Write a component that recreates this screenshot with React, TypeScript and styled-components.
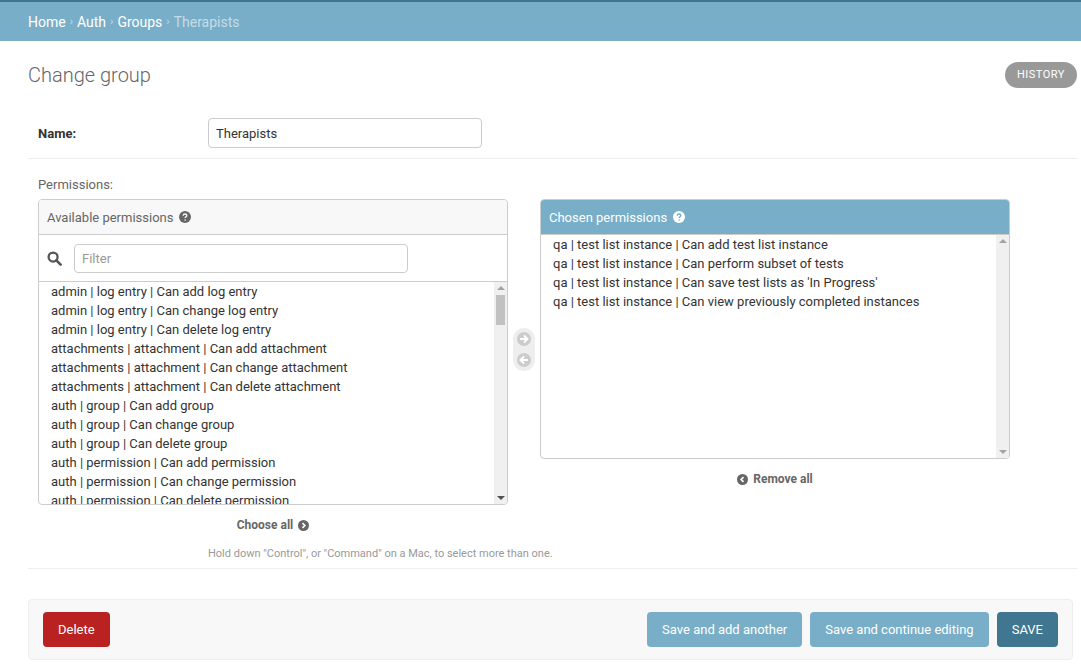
import React from "react";
import styled, { createGlobalStyle } from "styled-components";

const Global = createGlobalStyle`
  html, body { margin: 0; padding: 0; background: #fff; }
  body { font-family: Roboto, "Liberation Sans", sans-serif; color: #333; font-size: 14px; }
  * { box-sizing: border-box; }
`;

const Header = styled.div`
  height: 41px; background: #79aec8; border-top: 2px solid #417690;
  display: flex; align-items: center; padding: 0 28px; font-size: 14px; color: #fff;
  a { color: #fff; text-decoration: none; }
`;
const Sep = styled.span` margin: 0 4px; font-size: 11px; color: #c4dce8; `;
const Current = styled.span` color: #c4dce8; `;

const Content = styled.div` padding: 18px 4px 0 28px; `;
const TitleRow = styled.div` display: flex; justify-content: space-between; align-items: flex-start; `;
const Title = styled.h1` margin: 4px 0 0; font-size: 20px; font-weight: 300; color: #666; `;
const History = styled.a`
  margin-top: 3px; background: #999; color: #fff; border-radius: 15px; font-size: 11px;
  letter-spacing: 0.5px; height: 26px; line-height: 26px; width: 72px; text-align: center;
`;

const FormRow = styled.div`
  display: flex; align-items: center; padding: 20px 10px 10px; border-bottom: 1px solid #eee;
`;
const Label = styled.label` width: 170px; font-weight: bold; font-size: 13px; color: #333; `;
const TextInput = styled.div`
  width: 274px; height: 30px; border: 1px solid #ccc; border-radius: 4px; padding: 0 7px;
  display: flex; align-items: center; font-size: 13px; color: #333;
`;

const PermRow = styled.div` padding: 18px 10px 8px; border-bottom: 1px solid #eee; `;
const PermLabel = styled.div` font-size: 13px; color: #666; margin-bottom: 7px; `;
const Selector = styled.div` display: flex; align-items: flex-start; `;
const Column = styled.div` width: 470px; display: flex; flex-direction: column; `;
const Box = styled.div<{ $h: number }>`
  border: 1px solid #ccc; border-radius: 4px; overflow: hidden; height: ${p => p.$h}px;
  display: flex; flex-direction: column;
`;
const BoxHead = styled.div<{ $chosen?: boolean }>`
  height: 35px; padding: 0 8px; display: flex; align-items: center; gap: 6px; font-size: 13px;
  background: ${p => (p.$chosen ? "#79aec8" : "#f8f8f8")}; color: ${p => (p.$chosen ? "#fff" : "#666")};
  border-bottom: 1px solid #ccc;
`;
const FilterRow = styled.div`
  height: 47px; display: flex; align-items: center; gap: 12px; padding: 0 8px; border-bottom: 1px solid #ccc;
`;
const FilterInput = styled.div`
  width: 334px; height: 29px; border: 1px solid #ccc; border-radius: 4px; padding: 0 7px;
  display: flex; align-items: center; font-size: 13px; color: #999;
`;
const ListArea = styled.div` flex: 1; display: flex; overflow: hidden; `;
const List = styled.div` flex: 1; padding: 0 12px; font-size: 13px; color: #333; line-height: 19px; overflow: hidden; `;
const ScrollTrack = styled.div`
  width: 13px; background: #f0f0f0; display: flex; flex-direction: column; align-items: center; padding: 4px 0;
`;
const Thumb = styled.div` width: 9px; height: 30px; background: #c1c1c1; margin-top: 5px; `;
const Fill = styled.div` flex: 1; `;
const ArrowUp = styled.div` width: 0; height: 0; border-left: 4px solid transparent; border-right: 4px solid transparent; border-bottom: 4px solid #a3a3a3; `;
const ArrowDown = styled(ArrowUp)<{ $c: string }>` border-bottom: none; border-top: 4px solid ${p => p.$c}; `;

const Movers = styled.div`
  margin: 129px 5px 0 5px; width: 22px; padding: 4px 0; border-radius: 11px; background: #eee;
  display: flex; flex-direction: column; align-items: center; gap: 7px;
`;
const ActionLink = styled.div<{ $mt: number }>`
  display: flex; align-items: center; justify-content: center; gap: 5px; font-weight: bold;
  font-size: 12px; color: #666; margin-top: ${p => p.$mt}px;
`;
const Help = styled.div` font-size: 11px; color: #999; margin: 15px 0 0 170px; `;

const Submit = styled.div`
  margin: 30px 4px 0 0; background: #f8f8f8; border: 1px solid #eee; border-radius: 4px;
  padding: 12px 14px; display: flex; align-items: center; gap: 8px;
`;
const Btn = styled.div<{ $bg: string }>`
  height: 35px; padding: 0 15px; border-radius: 4px; background: ${p => p.$bg}; color: #fff;
  font-size: 13px; display: flex; align-items: center;
`;
const Spacer = styled.div` flex: 1; `;

const Circle = ({ dir, color, size = 14 }: { dir: "l" | "r"; color: string; size?: number }) => (
  <svg width={size} height={size} viewBox="0 0 16 16">
    <circle cx="8" cy="8" r="8" fill={color} />
    {dir === "r" ? (
      <path d="M3.5 8h8M8 4L12 8 8 12" stroke="#fff" strokeWidth="2.2" fill="none" />
    ) : (
      <path d="M12.5 8h-8M8 4L4 8 8 12" stroke="#fff" strokeWidth="2.2" fill="none" />
    )}
  </svg>
);
const Chevron = ({ dir, color }: { dir: "l" | "r"; color: string }) => (
  <svg width="11" height="11" viewBox="0 0 16 16">
    <circle cx="8" cy="8" r="8" fill={color} />
    <path d={dir === "r" ? "M6.5 4.5L10 8 6.5 11.5" : "M9.5 4.5L6 8 9.5 11.5"} stroke="#fff" strokeWidth="2.4" fill="none" />
  </svg>
);
const Question = ({ color, fg }: { color: string; fg: string }) => (
  <svg width="12" height="12" viewBox="0 0 16 16">
    <circle cx="8" cy="8" r="8" fill={color} />
    <path d="M5.6 6.2C5.6 4.8 6.7 4 8 4s2.4.8 2.4 2.1c0 1.6-2.2 1.7-2.2 3.3" stroke={fg} strokeWidth="1.8" fill="none" />
    <circle cx="8.2" cy="12" r="1.1" fill={fg} />
  </svg>
);
const Search = () => (
  <svg width="15" height="15" viewBox="0 0 16 16">
    <circle cx="6.5" cy="6.5" r="4.8" stroke="#555" strokeWidth="2.4" fill="none" />
    <path d="M10 10l4.5 4.5" stroke="#555" strokeWidth="2.8" strokeLinecap="round" />
  </svg>
);

const available = [
  "admin | log entry | Can add log entry",
  "admin | log entry | Can change log entry",
  "admin | log entry | Can delete log entry",
  "attachments | attachment | Can add attachment",
  "attachments | attachment | Can change attachment",
  "attachments | attachment | Can delete attachment",
  "auth | group | Can add group",
  "auth | group | Can change group",
  "auth | group | Can delete group",
  "auth | permission | Can add permission",
  "auth | permission | Can change permission",
  "auth | permission | Can delete permission",
];
const chosen = [
  "qa | test list instance | Can add test list instance",
  "qa | test list instance | Can perform subset of tests",
  "qa | test list instance | Can save test lists as 'In Progress'",
  "qa | test list instance | Can view previously completed instances",
];

export default function App() {
  return (
    <>
      <Global />
      <Header>
        <a>Home</a><Sep>›</Sep><a>Auth</a><Sep>›</Sep><a>Groups</a><Sep>›</Sep><Current>Therapists</Current>
      </Header>
      <Content>
        <TitleRow>
          <Title>Change group</Title>
          <History>HISTORY</History>
        </TitleRow>
        <FormRow style={{ marginTop: 10 }}>
          <Label>Name:</Label>
          <TextInput>Therapists</TextInput>
        </FormRow>
        <PermRow>
          <PermLabel>Permissions:</PermLabel>
          <Selector>
            <Column>
              <Box $h={306}>
                <BoxHead>Available permissions <Question color="#666" fg="#f8f8f8" /></BoxHead>
                <FilterRow><Search /><FilterInput>Filter</FilterInput></FilterRow>
                <ListArea>
                  <List>{available.map(t => <div key={t}>{t}</div>)}</List>
                  <ScrollTrack><ArrowUp /><Thumb /><Fill /><ArrowDown $c="#505050" /></ScrollTrack>
                </ListArea>
              </Box>
              <ActionLink $mt={13}>Choose all <Chevron dir="r" color="#666" /></ActionLink>
            </Column>
            <Movers>
              <Circle dir="r" color="#ccc" />
              <Circle dir="l" color="#ccc" />
            </Movers>
            <Column>
              <Box $h={260}>
                <BoxHead $chosen>Chosen permissions <Question color="#fff" fg="#79aec8" /></BoxHead>
                <ListArea>
                  <List>{chosen.map(t => <div key={t}>{t}</div>)}</List>
                  <ScrollTrack><ArrowUp /><Fill /><ArrowDown $c="#a3a3a3" /></ScrollTrack>
                </ListArea>
              </Box>
              <ActionLink $mt={13}><Chevron dir="l" color="#666" /> Remove all</ActionLink>
            </Column>
          </Selector>
          <Help>Hold down "Control", or "Command" on a Mac, to select more than one.</Help>
        </PermRow>
        <Submit>
          <Btn $bg="#ba2121">Delete</Btn>
          <Spacer />
          <Btn $bg="#79aec8">Save and add another</Btn>
          <Btn $bg="#79aec8">Save and continue editing</Btn>
          <Btn $bg="#417690">SAVE</Btn>
        </Submit>
      </Content>
    </>
  );
}
